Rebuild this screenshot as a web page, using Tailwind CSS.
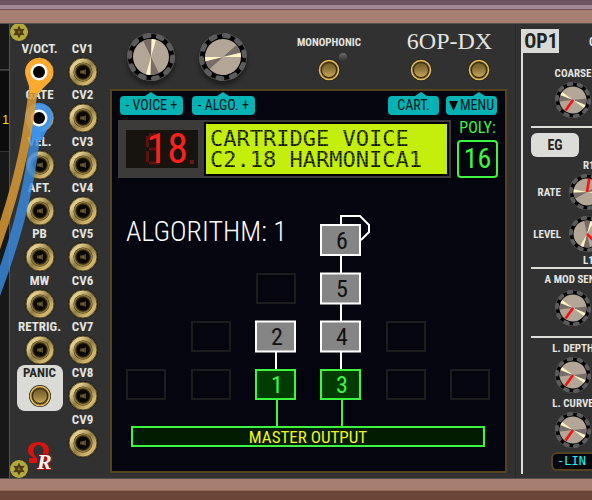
<!DOCTYPE html>
<html lang="en">
<head>
<meta charset="utf-8">
<meta name="viewport" content="width=device-width, initial-scale=1">
<title>6OP-DX</title>
<script src="https://cdn.jsdelivr.net/npm/@tailwindcss/browser@4"></script>
</head>
<body class="min-h-screen flex flex-col overflow-x-hidden bg-[#6b4638] font-['Roboto_Condensed','Open_Sans_Condensed',Roboto,sans-serif] text-[#e4e4e0]">

<svg class="absolute size-0" aria-hidden="true">
  <defs>
    <linearGradient id="gold" x1="0" y1="0" x2="1" y2="1">
      <stop offset="0" stop-color="#7d6a38"/><stop offset=".22" stop-color="#e6d093"/><stop offset=".5" stop-color="#8f7a42"/><stop offset=".78" stop-color="#d6ba70"/><stop offset="1" stop-color="#5f4e24"/>
    </linearGradient>
    <linearGradient id="cap" x1="0" y1="0" x2="0" y2="1">
      <stop offset="0" stop-color="#6d5726"/><stop offset=".5" stop-color="#957a3a"/><stop offset="1" stop-color="#c9a95a"/>
    </linearGradient>
    <symbol id="jack" viewBox="0 0 30 30">
      <circle cx="15" cy="15" r="15" fill="#201e19"/>
      <circle cx="15" cy="15" r="14" fill="url(#gold)"/>
      <circle cx="15" cy="15" r="14" fill="none" stroke="#55482a" stroke-width="1"/>
      <circle cx="15" cy="15" r="9.500" fill="#3a3018"/>
      <circle cx="15" cy="15" r="8.500" fill="none" stroke="#8d763c" stroke-width="1.500"/>
      <circle cx="15" cy="15" r="6.500" fill="#0a0805"/>
      <path d="M12 13.500h3l3-1.500v6l-3-1.500h-3z" fill="#57482a"/>
      <path d="M15 13.500v3" stroke="#8c7747" stroke-width="1"/>
    </symbol>
    <symbol id="push" viewBox="0 0 22 22">
      <circle cx="11" cy="11" r="11" fill="#26231c"/>
      <circle cx="11" cy="11" r="9.500" fill="#5a4518" stroke="#e3bd5d" stroke-width="1.600"/>
      <circle cx="11" cy="11" r="7.500" fill="url(#cap)" stroke="#2f240c" stroke-width="1"/>
    </symbol>
    <symbol id="ring" viewBox="0 0 48 48">
      <circle cx="24" cy="24" r="24" fill="#4e4e4f"/>
      <circle cx="24" cy="24" r="23" fill="#000"/>
      <circle cx="24" cy="24" r="21.500" fill="none" stroke="#5c5c5e" stroke-width="5" stroke-linecap="round" stroke-dasharray="4 9.509"/>
    </symbol>
    <symbol id="face" viewBox="0 0 48 48">
      <circle cx="24" cy="24" r="18" fill="#b3a697"/>
      <path d="M24 24L15.500 8.100A18 18 0 0 1 24 6zM24 24L32.500 39.900A18 18 0 0 1 24 42z" fill="#786c6a"/>
      <path d="M24 24V6A18 18 0 0 1 28.400 6.500zM24 24V42A18 18 0 0 1 19.600 41.500z" fill="#fff4c4"/>
    </symbol>
    <symbol id="screw" viewBox="0 0 18 18">
      <circle cx="9" cy="9" r="9" fill="#b5a93c"/>
      <path d="M9 2.500l1.800 3.400 3.900-.2L12.600 9l2.100 3.300-3.900-.2L9 15.500l-1.800-3.400-3.900.2L5.400 9 3.300 5.700l3.900.2z" fill="#4c3c16"/>
      <circle cx="9" cy="9" r="1.500" fill="#7a6328"/>
    </symbol>
  </defs>
</svg>

<header class="h-6 shrink-0 border-b border-[#55504e] bg-[#a67f70]">
  <div class="h-[5px] bg-[#6d5360]"></div>
  <div class="h-[5px] bg-[#a28797] border-b border-[#70505a]"></div>
</header>

<main class="relative flex grow shrink-0 overflow-hidden bg-[#313131]">

  <aside class="w-2.5 shrink-0 border-r border-[#555] bg-[#171717] flex flex-col">
    <div class="h-[46px] border-b border-[#444]"></div>
    <div class="h-[82px] border-y border-[#333] bg-[#0c0c0c] flex items-center justify-end pt-[18px] font-['Liberation_Sans'] text-xs text-[#eee600]">1</div>
  </aside>

  <section aria-label="Inputs" class="relative w-[95px] shrink-0 pt-[17px] pb-5 pl-2 pr-px flex flex-col">
    <svg class="absolute left-0 -top-px size-[18px]"><use href="#screw"/></svg>
    <svg class="absolute left-0 bottom-0 size-[18px]"><use href="#screw"/></svg>
    <div class="grow grid grid-cols-2 grid-rows-9 text-[13px] leading-4 font-bold text-center whitespace-nowrap">
      <div class="flex flex-col items-center"><span>V/OCT.</span><svg class="size-[30px]"><use href="#jack"/></svg></div>
      <div class="flex flex-col items-center"><span>CV1</span><svg class="size-[30px]"><use href="#jack"/></svg></div>
      <div class="flex flex-col items-center"><span>GATE</span><svg class="size-[30px]"><use href="#jack"/></svg></div>
      <div class="flex flex-col items-center"><span>CV2</span><svg class="size-[30px]"><use href="#jack"/></svg></div>
      <div class="flex flex-col items-center"><span>VEL.</span><svg class="size-[30px]"><use href="#jack"/></svg></div>
      <div class="flex flex-col items-center"><span>CV3</span><svg class="size-[30px]"><use href="#jack"/></svg></div>
      <div class="flex flex-col items-center"><span>AFT.</span><svg class="size-[30px]"><use href="#jack"/></svg></div>
      <div class="flex flex-col items-center"><span>CV4</span><svg class="size-[30px]"><use href="#jack"/></svg></div>
      <div class="flex flex-col items-center"><span>PB</span><svg class="size-[30px]"><use href="#jack"/></svg></div>
      <div class="flex flex-col items-center"><span>CV5</span><svg class="size-[30px]"><use href="#jack"/></svg></div>
      <div class="flex flex-col items-center"><span>MW</span><svg class="size-[30px]"><use href="#jack"/></svg></div>
      <div class="flex flex-col items-center"><span>CV6</span><svg class="size-[30px]"><use href="#jack"/></svg></div>
      <div class="flex flex-col items-center"><span>RETRIG.</span><svg class="size-[30px]"><use href="#jack"/></svg></div>
      <div class="flex flex-col items-center"><span>CV7</span><svg class="size-[30px]"><use href="#jack"/></svg></div>
      <div class="flex justify-center"><button class="w-[46px] h-[46px] shrink-0 rounded-lg bg-[#dadad7] text-[#262626] flex flex-col items-center"><span>PANIC</span><svg class="mt-1 size-[22px]"><use href="#push"/></svg></button></div>
      <div class="flex flex-col items-center"><span>CV8</span><svg class="size-[30px]"><use href="#jack"/></svg></div>
      <div class="flex items-end justify-center">
        <svg class="w-6 h-7 overflow-visible translate-y-3" viewBox="0 0 24 28" role="img" aria-label="Omega R">
          <path d="M1 21v-5h5C2.500 14 0 11.500 0 8.500 0 3.500 4 0 10.500 0S21 3.500 21 8.500c0 3-2.500 5.500-6 7.500h5v5h-8v-5c2.500-2 3.500-4.500 3.500-7.500S13.500 3 10.500 3 5.500 5.500 5.500 8.500 6.500 14 9 16v5z" fill="#d8120f"/>
          <text x="9" y="27" font-family="Liberation Serif" font-size="22" font-style="italic" fill="#f2f2f2" stroke="#8d1713" stroke-width="2" paint-order="stroke">R</text>
        </svg>
      </div>
      <div class="flex flex-col items-center"><span>CV9</span><svg class="size-[30px]"><use href="#jack"/></svg></div>
    </div>
  </section>

  <section aria-label="Voice" class="grow min-w-0 pl-[5px] pr-2 pb-[5px] flex flex-col">
    <div class="h-[65px] shrink-0 flex pl-[17px]">
      <div class="flex gap-6 pt-[9px]">
        <label class="relative size-12"><input type="range" aria-label="Voice" class="sr-only">
          <svg class="size-12 drop-shadow-[0_4px_2px_#00000066]" viewBox="0 0 48 48"><use href="#ring"/><use href="#face" transform="rotate(2 24 24)"/></svg></label>
        <label class="relative size-12"><input type="range" aria-label="Algorithm" class="sr-only">
          <svg class="size-12 drop-shadow-[0_4px_2px_#00000066]" viewBox="0 0 48 48"><use href="#ring" transform="rotate(20 24 24)"/><use href="#face" transform="rotate(76 24 24)"/></svg></label>
      </div>
      <div class="relative ml-12 w-[68px] pt-3 flex flex-col items-center">
        <label for="mono" class="text-[11px] leading-[14px] font-bold">MONOPHONIC</label>
        <span class="absolute left-11 top-[29px] size-2 rounded-full bg-linear-to-b from-[#6a6a6a] to-[#333]"></span>
        <button id="mono" aria-label="Monophonic" class="mt-[9px] size-[22px]"><svg class="size-[22px]"><use href="#push"/></svg></button>
      </div>
      <div class="ml-auto w-[111px] pt-1">
        <h1 class="text-center text-2xl leading-[26px] font-['Liberation_Serif',serif] whitespace-nowrap pr-1">6OP-DX</h1>
        <div class="flex gap-9 pl-3.5 pt-[5px]">
          <button aria-label="Cartridge" class="size-[22px]"><svg class="size-[22px]"><use href="#push"/></svg></button>
          <button aria-label="Menu" class="size-[22px]"><svg class="size-[22px]"><use href="#push"/></svg></button>
        </div>
      </div>
    </div>

    <div class="grow border-2 border-[#54431e] bg-[#05050f] flex flex-col">
      <div class="pt-[5px] px-2 flex text-sm leading-[19px] text-center text-[#06181c] whitespace-nowrap">
        <div class="relative w-[63px] rounded bg-[#05b2b4]"><svg class="absolute left-6 -top-1 w-3.5 h-1" viewBox="0 0 14 4"><path d="M7 0l6 4H1z" fill="#05b2b4"/></svg>- VOICE +</div>
        <div class="relative ml-[9px] w-[63px] rounded bg-[#05b2b4]"><svg class="absolute left-6 -top-1 w-3.5 h-1" viewBox="0 0 14 4"><path d="M7 0l6 4H1z" fill="#05b2b4"/></svg>- ALGO. +</div>
        <div class="relative ml-auto w-[51px] rounded bg-[#05b2b4]"><svg class="absolute left-[26px] -top-1 w-3.5 h-1" viewBox="0 0 14 4"><path d="M7 0l6 4H1z" fill="#05b2b4"/></svg>CART.</div>
        <div class="relative ml-[7px] w-[51px] rounded bg-[#05b2b4] flex items-center justify-center gap-0.5"><svg class="absolute left-[26px] -top-1 w-3.5 h-1" viewBox="0 0 14 4"><path d="M7 0l6 4H1z" fill="#05b2b4"/></svg><svg class="w-[9px] h-2.5" viewBox="0 0 9 10"><path d="M0 0h9L4.500 10z" fill="#020808"/></svg>MENU</div>
      </div>

      <div class="mt-[5px] pl-1.5 pr-[7px] flex h-[58px]">
        <div class="grow bg-[#3d3b39] flex p-0.5 pl-2 items-center">
          <div class="w-[72px] h-[38px] bg-[#17130f] flex items-center justify-end gap-1 pr-1">
            <svg class="w-[18px] h-8" viewBox="0 0 18 32" fill="none" stroke="#5c1210" stroke-width="3"><path d="M2.500 3v11M2.500 18v11M4 2h10M4 16h10M4 30h10"/></svg>
            <span class="-ml-5 text-[42px] leading-[38px] text-[#fb221c]">18</span>
            <span class="-ml-0.5 self-end mb-1 size-1 bg-[#6e1714]"></span>
          </div>
          <div class="ml-1.5 grow h-[54px] border-2 border-black bg-[#c4ef0c] pl-1 pt-1 relative overflow-hidden font-['DejaVu_Sans_Mono',monospace] text-[22px] leading-[21px] whitespace-pre text-[#0c1200]">CARTRIDGE VOICE
C2.18 HARMONICA1<div class="absolute inset-0 bg-[repeating-linear-gradient(0deg,#c4ef0c44_0_1px,transparent_1px_3px),repeating-linear-gradient(90deg,#c4ef0c33_0_1px,transparent_1px_3px)]"></div></div>
        </div>
        <div class="ml-1.5 w-[41px] text-center text-[#3cf63f]">
          <div class="text-base leading-4 whitespace-nowrap">POLY:</div>
          <div class="mt-1 h-[38px] border-2 border-[#3cf63f] rounded-sm text-[28px] leading-[34px]">16</div>
        </div>
      </div>

      <svg class="w-full grow" viewBox="112 178 393 293" role="img" aria-label="Algorithm 1 diagram">
        <text x="126" y="241" font-size="28" fill="#fff" class="font-light">ALGORITHM: 1</text>
        <g fill="none" stroke="#1c1c1f" stroke-width="2">
          <path d="M257 274h38v29h-38zM192 322h38v29h-38zM387 322h38v29h-38zM127 370h38v29h-38zM192 370h38v29h-38zM387 370h38v29h-38zM451 370h38v29h-38z"/>
        </g>
        <g fill="none" stroke="#fff" stroke-width="2">
          <path d="M341 225v-9h19l9 9v7l-8 8M341 256v17M341 304v17M341 352v17M276 352v17"/>
          <path d="M321 225h39v30h-39zM321 273.500h39v30h-39zM321 321.500h39v30h-39zM256 321.500h39v30h-39z" fill="#858585"/>
        </g>
        <g stroke="#3cf63f" stroke-width="2">
          <path d="M277 400v27M342 400v27" fill="none"/>
          <path d="M256 370h39v29h-39zM321 370h39v29h-39z" fill="#003c00"/>
          <path d="M132 427h352v19H132z" fill="#021c02"/>
        </g>
        <g font-size="24" text-anchor="middle" fill="#111">
          <text x="342" y="249">6</text><text x="342" y="297">5</text><text x="342" y="345">4</text><text x="277" y="345">2</text>
          <g fill="#3cf63f"><text x="342" y="393">3</text><text x="277" y="393">1</text></g>
        </g>
        <text x="308" y="443" font-size="17" text-anchor="middle" fill="#f4f414">MASTER OUTPUT</text>
      </svg>
    </div>
  </section>

  <section aria-label="Operator 1" class="relative w-[77px] shrink-0 pl-[5px] pt-[5px] pb-1 border-l border-[#292929] overflow-hidden">
    <div class="h-full w-24 border-l-2 border-[#dcdcd8] text-[11px] leading-[13px] font-bold whitespace-nowrap">
      <div class="h-6 flex justify-between"><h2 class="w-9 bg-[#d8dad5] text-[#222] text-xl leading-6 text-center">OP1</h2><span class="w-7 pt-[5px] text-xs">OUT</span></div>
      <div class="pl-2">
        <label class="pt-3.5 w-[84px] flex flex-col items-center relative">COARSE<input type="range" class="sr-only">
          <svg class="mt-0.5 size-9" viewBox="0 0 48 48"><use href="#ring"/><use href="#face" transform="rotate(112 24 24)"/><path d="M24 24L14 38" stroke="#f31212" stroke-width="3.500"/></svg></label>
        <div class="mt-2 h-0.5 bg-[#dcdcd8]"></div>
        <button class="mt-[5px] block w-12 h-6 rounded-md bg-[#dcdcd8] text-[#222] text-sm leading-6 font-bold">EG</button>
        <div class="pt-0.5 pl-[52px]">R1</div>
        <label class="relative h-10 flex items-center gap-2"><span class="w-[30px] text-right">RATE</span><input type="range" class="sr-only">
          <svg class="size-9" viewBox="0 0 48 48"><use href="#ring"/><use href="#face" transform="rotate(88 24 24)"/><path d="M24 24L27 6" stroke="#f31212" stroke-width="3.500"/></svg></label>
        <label class="relative mt-0.5 h-10 flex items-center gap-2"><span class="w-[30px] text-right">LEVEL</span><input type="range" class="sr-only">
          <svg class="size-9" viewBox="0 0 48 48"><use href="#ring"/><use href="#face" transform="rotate(15 24 24)"/><path d="M24 24L36 36" stroke="#f31212" stroke-width="3.500"/></svg></label>
        <div class="pl-[52px]">L1</div>
        <div class="h-0.5 bg-[#dcdcd8]"></div>
        <label class="pt-1 w-[84px] flex flex-col items-center relative">A MOD SENS<input type="range" class="sr-only">
          <svg class="mt-1 size-9" viewBox="0 0 48 48"><use href="#ring"/><use href="#face" transform="rotate(112 24 24)"/><path d="M24 24L14 38" stroke="#f31212" stroke-width="3.500"/></svg></label>
        <div class="mt-2.5 h-0.5 bg-[#dcdcd8]"></div>
        <label class="pt-1 w-[84px] flex flex-col items-center relative">L. DEPTH<input type="range" class="sr-only">
          <svg class="mt-0.5 size-9" viewBox="0 0 48 48"><use href="#ring"/><use href="#face" transform="rotate(112 24 24)"/><path d="M24 24L14 38" stroke="#f31212" stroke-width="3.500"/></svg></label>
        <label class="pt-1 w-[84px] flex flex-col items-center relative">L. CURVE<input type="range" class="sr-only">
          <svg class="mt-0.5 size-9" viewBox="0 0 48 48"><use href="#ring"/><use href="#face" transform="rotate(112 24 24)"/><path d="M24 24L14 38" stroke="#f31212" stroke-width="3.500"/></svg></label>
        <div class="mt-1 ml-5 w-12 h-[19px] rounded-md border-2 border-[#54431e] bg-[#05050f] pl-1 font-['DejaVu_Sans_Mono',monospace] text-xs leading-[15px] font-normal text-[#0ff]">-LIN</div>
      </div>
    </div>
  </section>

  <!-- Patch cables run over the panel -->
  <svg class="absolute left-0 top-0 w-[60px] h-[300px] pointer-events-none" viewBox="0 24 60 300" aria-hidden="true">
    <path d="M36 128C32 168 24 218-5 295" fill="none" stroke="#3a8be0" stroke-width="10" stroke-opacity=".82"/>
    <path d="M26 122a14 14 0 1 1 26 0c-2 7-8 9-9 18h-11c0-6-3-10-6-18z" fill="#3d95ee" fill-opacity=".9"/>
    <circle cx="39" cy="118" r="8.500" fill="#fff"/><circle cx="39" cy="118" r="6" fill="#000"/>
    <path d="M34 84C29 125 23 172-5 250" fill="none" stroke="#d99a35" stroke-width="9" stroke-opacity=".85"/>
    <path d="M26 77a14 14 0 1 1 26 0c-2 7-9 9-12 16h-10c0-6-2-9-4-16z" fill="#fba92f"/>
    <circle cx="39" cy="72" r="8.500" fill="#fff"/><circle cx="39" cy="72" r="6" fill="#000"/>
  </svg>
</main>

<footer class="h-[22px] shrink-0 border-t border-[#55504e] flex flex-col">
  <div class="h-3 bg-[#a67f70] border-b border-[#8d6759]"></div>
</footer>
</body>
</html>
